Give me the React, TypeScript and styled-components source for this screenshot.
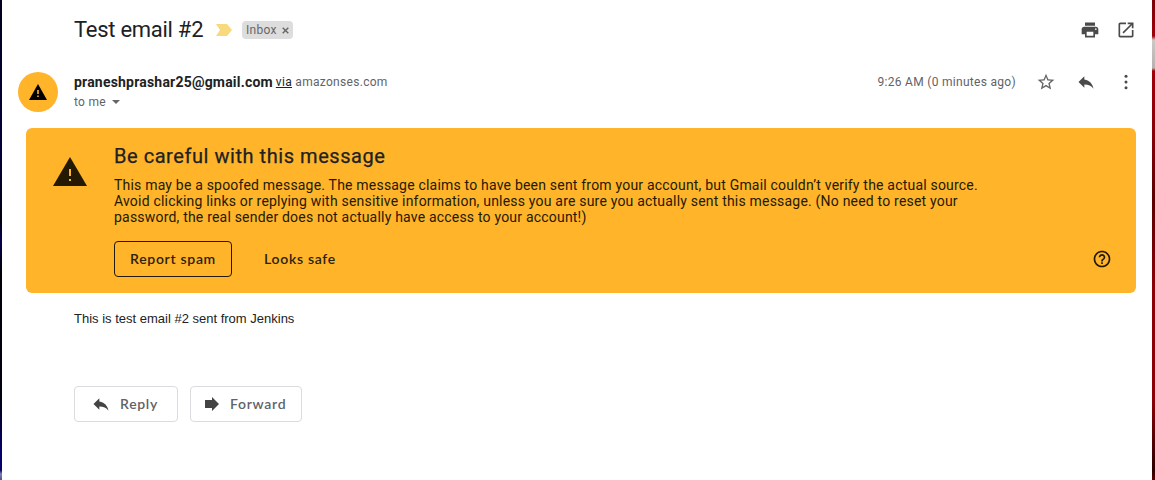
import React from "react";
import styled, { createGlobalStyle } from "styled-components";

const GlobalStyle = createGlobalStyle`
  * { box-sizing: border-box; }
  body { margin: 0; background: #fff; overflow: hidden; font-family: Roboto, "Liberation Sans", sans-serif; }
  h1, h2, p { margin: 0; font-weight: 400; }
  button { font: inherit; color: inherit; background: none; border: 0; padding: 0; }
  svg { display: block; flex: none; }
`;

const display = `Lato, Roboto, sans-serif`;

const Window = styled.div`
  display: flex;
  width: 1155px;
  height: 480px;
`;
const LeftEdge = styled.div`
  width: 2px;
  background: linear-gradient(#02001c 0, #03003a 150px, #000010 220px, #040050 240px, #000008 270px, #000014 400px, #04006a 450px, #060068 470px, #8080b0 474px, #55508c 480px);
`;
const RightEdge = styled.div`
  width: 3px;
  background: linear-gradient(#7c0008 0, #a0000a 36px, #cfc6c6 40px, #b9b0b0 68px, #a0000a 71px, #8a0008 130px, #5c0000 200px, #8c0008 290px, #8c0008 400px, #2c0000 470px, #5c0000 480px);
`;
const Message = styled.main`
  flex: 1;
  min-width: 0;
  background: #fff;
`;
const SubjectRow = styled.header`
  display: flex;
  align-items: center;
  height: 60px;
  padding: 0 16px 0 72px;
`;
const Subject = styled.h1`
  width: 142px;
  padding-bottom: 1px;
  font: 400 22px/28px Roboto, sans-serif;
  letter-spacing: -0.27px;
  white-space: nowrap;
  color: #202124;
`;
const Label = styled.span`
  display: flex;
  align-items: center;
  height: 18px;
  width: 51px;
  margin-left: 10px;
  padding-left: 4px;
  gap: 5px;
  border-radius: 4px;
  background: #ddd;
  color: #666;
  font-size: 12px;
  letter-spacing: 0.3px;
`;
const Actions = styled.div<{ $gap: number }>`
  display: flex;
  align-items: center;
  gap: ${(p) => p.$gap}px;
  margin-left: auto;
  color: #4a4a4a;
`;
const SenderRow = styled.section`
  display: flex;
  height: 68px;
  padding: 12px 16px 16px;
`;
const Avatar = styled.div`
  display: flex;
  align-items: center;
  justify-content: center;
  width: 40px;
  height: 40px;
  border-radius: 50%;
  background: #ffb42a;
`;
const Sender = styled.div`
  margin-left: 16px;
  font-size: 12px;
  color: #5f6368;
  letter-spacing: 0.3px;
`;
const From = styled.div`
  display: flex;
  align-items: flex-start;
  height: 20px;
  line-height: 20px;
  white-space: pre;
`;
const Address = styled.strong`
  margin-right: 3px;
  font-size: 14px;
  letter-spacing: 0.2px;
  color: #202124;
`;
const Via = styled.u`
  color: #222;
`;
const To = styled.div`
  display: flex;
  align-items: center;
  gap: 6px;
  height: 20px;
`;
const SentRow = styled.div`
  display: flex;
  align-items: center;
  height: 20px;
  margin-left: auto;
`;
const Time = styled.span`
  margin-right: 20px;
  font-size: 12px;
  letter-spacing: 0.3px;
  color: #5f6368;
`;
const Banner = styled.section`
  display: flex;
  height: 165px;
  margin: 0 16px 0 24px;
  padding: 16px 24px 16px 27px;
  border-radius: 6px;
  background: #ffb42a;
  color: #241a04;
`;
const WarningSlot = styled.div`
  width: 61px;
  padding-top: 13px;
`;
const Warning = styled.div`
  flex: 1;
`;
const WarningTitle = styled.h2`
  font: 400 20px/24px Roboto, sans-serif;
  letter-spacing: 0.55px;
  -webkit-text-stroke: 0.25px #202124;
  color: #202124;
`;
const WarningText = styled.p`
  margin-top: 9px;
  font-size: 14px;
  line-height: 16px;
  letter-spacing: 0.2px;
  white-space: pre;
`;
const WarningActions = styled.div`
  display: flex;
  align-items: center;
  margin-top: 16px;
`;
const Button = styled.button<{ $width: number; $outline?: string; $color: string }>`
  display: flex;
  align-items: center;
  justify-content: center;
  width: ${(p) => p.$width}px;
  height: 36px;
  border: 1px solid ${(p) => p.$outline ?? "transparent"};
  border-radius: 4px;
  font: 600 14px/20px ${display};
  letter-spacing: 0.7px;
  white-space: nowrap;
  color: ${(p) => p.$color};
`;
const Body = styled.p`
  padding: 18px 72px 0;
  font: 13px/16px "Liberation Sans", Arial, sans-serif;
  color: #222;
`;
const Replies = styled.footer`
  display: flex;
  gap: 12px;
  padding: 59px 72px 0;
`;
const ReplyButton = styled(Button)<{ $inset: number; $gap: number }>`
  justify-content: flex-start;
  padding-left: ${(p) => p.$inset}px;
  gap: ${(p) => p.$gap}px;
`;

const Icon = ({ d, size = 20, color = "currentColor" }: { d: string; size?: number; color?: string }) => (
  <svg width={size} height={size} viewBox="0 0 24 24" fill={color}><path d={d} /></svg>
);

const PRINT = "M19 8H5c-1.66 0-3 1.34-3 3v6h4v4h12v-4h4v-6c0-1.66-1.34-3-3-3zm-3 11H8v-5h8v5zm3-7c-.55 0-1-.45-1-1s.45-1 1-1 1 .45 1 1-.45 1-1 1zm-1-9H6v4h12V3z";
const OPEN = "M19 19H5V5h7V3H5c-1.11 0-2 .9-2 2v14c0 1.1.89 2 2 2h14c1.1 0 2-.9 2-2v-7h-2v7zM14 3v2h3.59l-9.83 9.83 1.41 1.41L19 6.41V10h2V3h-7z";
const STAR = "M22 9.24l-7.19-.62L12 2 9.19 8.63 2 9.24l5.46 4.73L5.82 21 12 17.27 18.18 21l-1.63-7.03L22 9.24zM12 15.4l-3.76 2.27 1-4.28-3.32-2.88 4.38-.38L12 6.1l1.71 4.04 4.38.38-3.32 2.88 1 4.28L12 15.4z";
const REPLY = "M10 9V5l-7 7 7 7v-4.1c5 0 8.5 1.6 11 5.1-1-5-4-10-11-11z";
const HELP = "M11 18h2v-2h-2v2zm1-16C6.48 2 2 6.48 2 12s4.48 10 10 10 10-4.48 10-10S17.52 2 12 2zm0 18c-4.41 0-8-3.59-8-8s3.59-8 8-8 8 3.59 8 8-3.59 8-8 8zm0-14c-2.21 0-4 1.79-4 4h2c0-1.1.9-2 2-2s2 .9 2 2c0 2-3 1.75-3 5h2c0-2.25 3-2.5 3-5 0-2.21-1.79-4-4-4z";

export default function App() {
  return (
    <>
      <GlobalStyle />
      <Window>
        <LeftEdge />
        <Message>
          <SubjectRow>
            <Subject>Test email #2</Subject>
            <svg width="16" height="12" viewBox="0 0 16 12"><path d="M0 0h11l5 6-5 6H0l4-6z" fill="#f9d97e" /></svg>
            <Label>
              Inbox
              <svg width="7" height="7" viewBox="0 0 7 7"><path d="M.7.7l5.6 5.6M6.3.7L.7 6.3" stroke="#666" strokeWidth="1.4" /></svg>
            </Label>
            <Actions $gap={16}>
              <Icon d={PRINT} />
              <Icon d={OPEN} />
            </Actions>
          </SubjectRow>
          <SenderRow>
            <Avatar>
              <svg width="18" height="16" viewBox="0 0 18 16"><path d="M9 0l9 16H0z" fill="#000" /><path d="M8.2 6h1.6v4H8.2zm0 5.5h1.6V13H8.2z" fill="#ffb42a" /></svg>
            </Avatar>
            <Sender>
              <From>
                <Address>praneshprashar25@gmail.com</Address> <Via>via</Via> amazonses.com
              </From>
              <To>
                to me
                <svg width="8" height="4" viewBox="0 0 8 4"><path d="M0 0h8L4 4z" fill="#666" /></svg>
              </To>
            </Sender>
            <SentRow>
              <Time>9:26 AM (0 minutes ago)</Time>
              <Actions $gap={20}>
                <Icon d={STAR} color="#666" />
                <Icon d={REPLY} />
                <svg width="20" height="20" viewBox="0 0 20 20" fill="currentColor">
                  <circle cx="10" cy="4.2" r="1.5" /><circle cx="10" cy="10" r="1.5" /><circle cx="10" cy="15.8" r="1.5" />
                </svg>
              </Actions>
            </SentRow>
          </SenderRow>
          <Banner>
            <WarningSlot>
              <svg width="34" height="29" viewBox="0 0 34 29"><path d="M17 0l17 29H0z" fill="#241a04" /><path d="M16 12h2v7h-2zm0 10h2v2h-2z" fill="#ffb42a" /></svg>
            </WarningSlot>
            <Warning>
              <WarningTitle>Be careful with this message</WarningTitle>
              <WarningText>{`This may be a spoofed message. The message claims to have been sent from your account, but Gmail couldn’t verify the actual source.
Avoid clicking links or replying with sensitive information, unless you are sure you actually sent this message. (No need to reset your
password, the real sender does not actually have access to your account!)`}</WarningText>
              <WarningActions>
                <Button $width={118} $outline="#241a04" $color="#2b2210">Report spam</Button>
                <Button $width={136} $color="#2b2210">Looks safe</Button>
                <Actions $gap={0}><Icon d={HELP} color="#241a04" /></Actions>
              </WarningActions>
            </Warning>
          </Banner>
          <Body>This is test email #2 sent from Jenkins</Body>
          <Replies>
            <ReplyButton $width={104} $inset={16} $gap={9} $outline="#dadce0" $color="#5f6368">
              <Icon d={REPLY} color="#444" />
              Reply
            </ReplyButton>
            <ReplyButton $width={112} $inset={14} $gap={11} $outline="#dadce0" $color="#5f6368">
              <svg width="14" height="14" viewBox="0 0 14 14"><path d="M0 3h7V0l7 7-7 7v-3H0z" fill="#444" /></svg>
              Forward
            </ReplyButton>
          </Replies>
        </Message>
        <RightEdge />
      </Window>
    </>
  );
}
